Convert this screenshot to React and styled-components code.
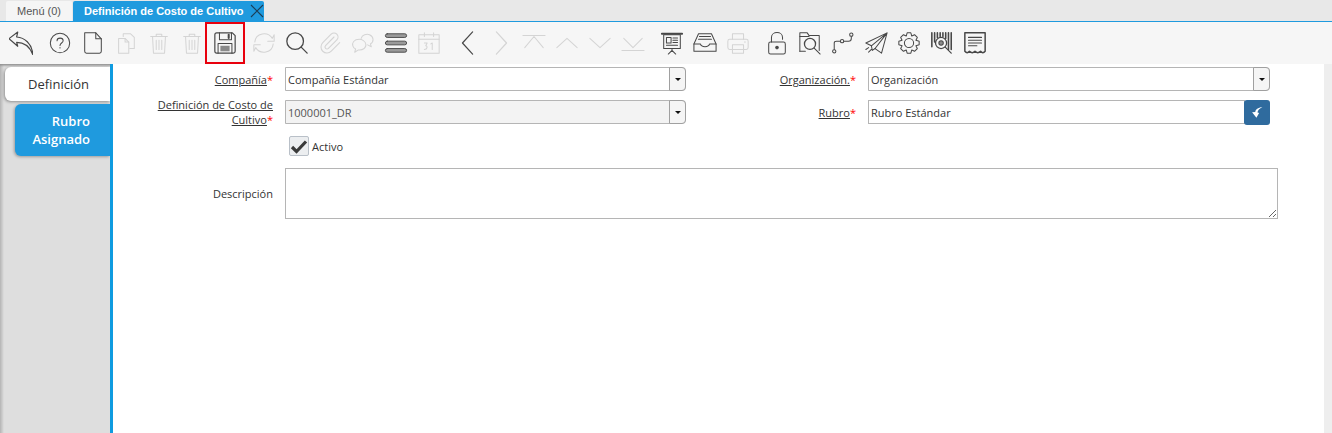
import React from "react";
import styled, { createGlobalStyle } from "styled-components";

const GlobalStyle = createGlobalStyle`
  html, body {
    margin: 0;
    padding: 0;
    height: 100%;
    overflow: hidden;
    background: #fff;
    font-family: "Open Sans", sans-serif;
  }
`;

const Page = styled.div`
  width: 1332px;
  height: 433px;
  display: flex;
  flex-direction: column;
`;

const TabBar = styled.div`
  height: 21px;
  display: flex;
  align-items: flex-end;
  padding-left: 6px;
  gap: 1px;
  background: #e8e8e8;
  border-bottom: 1px solid #1f9ade;
`;

const Tab = styled.div`
  height: 20px;
  display: flex;
  align-items: center;
  box-sizing: border-box;
  font-family: "Liberation Sans", Arial, sans-serif;
  font-size: 11px;
  padding: ${(p) => (p.$active ? "0 0 0 11px" : "0 11px 0 11px")};
  background: ${(p) => (p.$active ? "#1f9ade" : "#f5f5f5")};
  color: ${(p) => (p.$active ? "#fff" : "#555")};
  font-weight: ${(p) => (p.$active ? 700 : 400)};
  border-radius: 2px 2px 0 0;
`;

const TabClose = styled.svg`
  width: 14px;
  height: 14px;
  margin-left: 6px;
`;

const Toolbar = styled.div`
  height: 42px;
  display: flex;
  align-items: center;
  padding-left: 4px;
  gap: 6px;
  background: #f6f6f6;
`;

const ToolGroup = styled.div`
  display: flex;
`;

const ToolButton = styled.div`
  position: relative;
  width: 33px;
  height: 42px;
  display: flex;
  align-items: center;
  justify-content: center;
  color: ${(p) => (p.$off ? "#d4d4d4" : "#484848")};

  svg {
    width: 24px;
    height: 24px;
    fill: none;
    stroke: currentColor;
    stroke-width: 1.1;
    stroke-linecap: round;
    stroke-linejoin: round;
  }
`;

const Highlight = styled.div`
  position: absolute;
  left: -3px;
  top: 0;
  width: 40px;
  height: 42px;
  box-sizing: border-box;
  border: 2.5px solid #e8000d;
`;

const Body = styled.div`
  flex: 1;
  display: flex;
  min-height: 0;
`;

const SideTabs = styled.div`
  width: 110px;
  box-sizing: border-box;
  padding-top: 3px;
  display: flex;
  flex-direction: column;
  align-items: flex-end;
  gap: 3px;
  background: linear-gradient(#8f8f8f, transparent 3px),
    linear-gradient(90deg, #b4b4b4, #dedede 4px);
`;

const SideTab = styled.div`
  box-sizing: border-box;
  font-size: 13px;
  line-height: 18px;
  text-align: right;
  border-radius: 6px 0 0 6px;
  ${(p) =>
    p.$active
      ? `
    width: 105px;
    height: 34px;
    padding: 8px 21px 0 0;
    background: #fff;
    color: #333;
    box-shadow: -1px 1px 3px rgba(0, 0, 0, 0.35);
  `
      : `
    width: 95px;
    height: 52px;
    padding: 8px 20px 0 0;
    background: #1f9ade;
    color: #fff;
    font-weight: 600;
    box-shadow: -1px 1px 3px rgba(0, 0, 0, 0.3);
  `}
`;

const Content = styled.div`
  flex: 1;
  border-left: 3px solid #0f9be0;
  background: #fff;
  padding-top: 3px;
`;

const Form = styled.div`
  display: grid;
  grid-template-columns: 172px 401px 182px 402px;
  font-size: 11px;
  color: #333;
`;

const Label = styled.div`
  height: ${(p) => p.$height || 24}px;
  margin-bottom: ${(p) => p.$gap ?? 9}px;
  padding-right: 12px;
  box-sizing: border-box;
  display: flex;
  align-items: center;
  justify-content: flex-end;
  text-align: right;
  line-height: 15px;
`;

const LabelText = styled.span`
  text-decoration: underline;
`;

const Star = styled.span`
  color: #f00;
`;

const Combo = styled.div`
  height: 24px;
  margin-bottom: 9px;
  display: flex;
  box-sizing: border-box;
  border: 1px solid #b5b5b5;
  border-radius: 0 4px 4px 0;
  background: ${(p) => (p.$readonly ? "#f3f3f3" : "#fff")};
`;

const ComboText = styled.div`
  flex: 1;
  padding-left: 2px;
  line-height: 23px;
  color: ${(p) => (p.$readonly ? "#555" : "#333")};
`;

const ComboArrow = styled.div`
  width: 15px;
  margin: -1px -1px -1px 0;
  display: flex;
  align-items: center;
  justify-content: center;
  background: #f5f5f5;
  border: 1px solid #a0a0a0;
  border-radius: 0 4px 4px 0;

  &::after {
    content: "";
    border-left: 3.5px solid transparent;
    border-right: 3.5px solid transparent;
    border-top: 3.5px solid #111;
  }
`;

const SearchRow = styled.div`
  height: 25px;
  margin-bottom: 8px;
  display: flex;
  align-items: flex-start;
`;

const SearchField = styled.div`
  width: 378px;
  height: 24px;
  box-sizing: border-box;
  border: 1px solid #b5b5b5;
  line-height: 23px;
  padding-left: 2px;
`;

const SearchButton = styled.div`
  width: 26px;
  height: 25px;
  margin-left: -1px;
  display: flex;
  align-items: center;
  justify-content: center;
  border-radius: 3px;
  background: #2f6b9e;
`;

const CheckRow = styled.div`
  grid-column: 2 / 5;
  height: 20px;
  margin: 3px 0 12px 4px;
  display: flex;
  align-items: center;
  gap: 3px;
`;

const CheckBox = styled.div`
  width: 20px;
  height: 20px;
  box-sizing: border-box;
  border: 1px solid #b9c0c8;
  border-radius: 2px;
  background: #eceef0;
  display: flex;
  align-items: center;
  justify-content: center;
`;

const Description = styled.textarea`
  grid-column: 2 / 5;
  width: 993px;
  height: 51px;
  margin: 0;
  padding: 2px;
  box-sizing: border-box;
  border: 1px solid #b5b5b5;
  border-radius: 0;
  outline: none;
  background: #fff;
`;

const Scrollbar = styled.div`
  width: 8px;
  background: #eeeeee;
`;

const Undo = () => (
  <svg viewBox="2 2 22 22">
    <path d="M2 9 L10 3 L9 7.5 C16 8 23 13 24 24 C21 16 16 12.5 9 12.5 L10 16 Z" />
  </svg>
);
const Help = () => (
  <svg viewBox="0 0 26 26">
    <circle cx="13" cy="13" r="10.5" />
    <path d="M9.8 10.5 C9.8 6.8 16.4 6.8 16.4 10.5 C16.4 13 13 13 13 15.6" />
    <path d="M13 18 v.4" />
  </svg>
);
const NewDoc = () => (
  <svg viewBox="0 0 26 26">
    <path d="M4 2 H16 L22 8.5 V22 Q22 24 20 24 H6 Q4 24 4 22 Z" />
    <path d="M16 2 V8.5 H22" />
  </svg>
);
const Copy = () => (
  <svg viewBox="0 0 26 26">
    <path d="M10 6 V3 H18 L22 7 V19 H17" />
    <path d="M5 8 H12 L16 12 V24 H5 Z" />
    <path d="M12 8 V12 H16" />
  </svg>
);
const Trash = () => (
  <svg viewBox="0 0 26 26">
    <path d="M4 6 H22" />
    <path d="M10 6 V3.5 H16 V6" />
    <path d="M6 6 L7 24 H19 L20 6" />
    <path d="M10 10 V20 M13 10 V20 M16 10 V20" />
  </svg>
);
const Save = () => (
  <svg viewBox="0 0 26 26">
    <path d="M2 4 Q2 2 4 2 H21 L24 5 V22 Q24 24 22 24 H4 Q2 24 2 22 Z" strokeWidth="1.3" />
    <path d="M7 2 V9.5 H20 V2" />
    <path d="M17 4 V7.5" strokeWidth="2.2" />
    <path d="M5.5 24 V13.5 H20.5 V24" />
    <rect x="8" y="16" width="10" height="6" fill="#8a8a8a" stroke="none" />
  </svg>
);
const Refresh = () => (
  <svg viewBox="0 0 26 26">
    <path d="M3 12 C4 2 17 0 22 8 L24 4 V11 H17" />
    <path d="M23 14 C22 24 9 26 4 18 L2 22 V15 H9" />
  </svg>
);
const Search = () => (
  <svg viewBox="0 0 26 26">
    <circle cx="11" cy="11" r="9" strokeWidth="1.4" />
    <path d="M17.5 17.5 L24 24" strokeWidth="1.4" />
  </svg>
);
const Attach = () => (
  <svg viewBox="0 0 24 24">
    <path d="m16 6-8.414 8.586a2 2 0 0 0 2.829 2.828l8.414-8.586a4 4 0 1 0-5.657-5.657l-8.379 8.551a6 6 0 1 0 8.485 8.485l8.379-8.551" />
  </svg>
);
const Chat = () => (
  <svg viewBox="0 0 26 26">
    <path d="M9 9 C3 9 1 13 2 16 C2.5 18 4 19 5 19.5 L4 23 L8 20.5 C13 21 17 18 16 14 C15.5 11 12 9 9 9 Z" />
    <path d="M11 8 C12 4 17 3 20 4 C25 6 25 12 21 14 L22 17 L18 15" />
  </svg>
);
const Rows = () => (
  <svg viewBox="0 0 26 26">
    <rect x="1.5" y="3" width="23" height="4" rx="2" fill="#9a9a9a" strokeWidth="1" />
    <rect x="1.5" y="11" width="23" height="4" rx="2" fill="#9a9a9a" strokeWidth="1" />
    <rect x="1.5" y="19" width="23" height="4" rx="2" fill="#9a9a9a" strokeWidth="1" />
  </svg>
);
const Calendar = () => (
  <svg viewBox="0 0 26 26">
    <rect x="2" y="4" width="22" height="20" />
    <path d="M2 9 H24 M8 2 V6 M18 2 V6" />
    <path d="M8 13 H11 L9.5 16 C11.5 16 11.5 20 8 20 M15 14 L16.5 13 V20" strokeWidth="1.1" />
  </svg>
);
const Prev = () => (
  <svg viewBox="0 0 26 26">
    <path d="M18 1 L7 13 L18 25" strokeWidth="1.3" />
  </svg>
);
const Next = () => (
  <svg viewBox="0 0 26 26">
    <path d="M8 1 L19 13 L8 25" strokeWidth="1.3" />
  </svg>
);
const First = () => (
  <svg viewBox="0 0 26 26">
    <path d="M1 5 H25 M3 18 L13 6 L23 18" />
  </svg>
);
const Up = () => (
  <svg viewBox="0 0 26 26">
    <path d="M2 18 L13 8 L24 18" />
  </svg>
);
const Down = () => (
  <svg viewBox="0 0 26 26">
    <path d="M2 8 L13 18 L24 8" />
  </svg>
);
const Last = () => (
  <svg viewBox="0 0 26 26">
    <path d="M3 8 L13 18 L23 8 M1 21 H25" />
  </svg>
);
const Board = () => (
  <svg viewBox="0 0 26 26">
    <path d="M2 3 H24" strokeWidth="2" />
    <rect x="4" y="4" width="18" height="15" />
    <rect x="7" y="7" width="5" height="6" strokeWidth="1.1" />
    <path d="M14 7.5 H19 M14 10 H19 M14 12.5 H19 M7 15.5 H19" strokeWidth="1.1" />
    <path d="M13 19 V21 M13 21 L9 25 M13 21 L17 25" />
  </svg>
);
const Tray = () => (
  <svg viewBox="0 0 26 26">
    <path d="M6 3 H20 L25 14 V22 H1 V14 Z" />
    <path d="M1 14 H8 C9 18 17 18 18 14 H25" />
    <path d="M7 6 H19 M6 9 H20" />
  </svg>
);
const Printer = () => (
  <svg viewBox="0 0 26 26">
    <path d="M7 9 V3 H19 V9" />
    <rect x="2" y="9" width="22" height="11" rx="2" />
    <rect x="7" y="15" width="12" height="9" />
    <path d="M20 12 h1" />
  </svg>
);
const Lock = () => (
  <svg viewBox="0 0 26 26">
    <path d="M7 12 V7 C7 0 19 0 19 7 V9" />
    <rect x="4" y="12" width="18" height="13" rx="2" />
    <circle cx="13" cy="18" r="1.4" fill="currentColor" />
  </svg>
);
const FolderSearch = () => (
  <svg viewBox="0 0 26 26">
    <path d="M2 22 V2 H10 L12 5 H23 V21" />
    <path d="M2 6 H12" />
    <circle cx="13" cy="14" r="6" strokeWidth="1.4" />
    <path d="M17.5 18.5 L24 25 M2 22 H8" />
  </svg>
);
const Workflow = () => (
  <svg viewBox="0 0 26 26">
    <circle cx="3.5" cy="22" r="1.8" />
    <circle cx="12" cy="11" r="1.8" />
    <circle cx="22" cy="4" r="1.8" />
    <path d="M3.5 20 V13 Q3.5 11 6 11 H10 M14 11 H19 Q22 11 22 8 V6" />
  </svg>
);
const Send = () => (
  <svg viewBox="0 0 26 26">
    <path d="M25 2 L2 13 L8 16 L25 2 L12 19 L19 24 Z" />
    <path d="M8 16 L9 21 L12 19 M5 23 L8 20 M2 20 L5 18" />
  </svg>
);
const Gear = () => (
  <svg viewBox="0 0 26 26">
    <circle cx="13" cy="13" r="5" />
    <path d="M11 2 H15 L16 5.5 L19 4 L22 7 L20.5 10 L24 11 V15 L20.5 16 L22 19 L19 22 L16 20.5 L15 24 H11 L10 20.5 L7 22 L4 19 L5.5 16 L2 15 V11 L5.5 10 L4 7 L7 4 L10 5.5 Z" />
  </svg>
);
const Barcode = () => (
  <svg viewBox="0 0 26 26">
    <path d="M2 2 V17 M5 2 V12 M8 2 V7 M11 2 V6 M14 2 V6 M17 2 V8 M20 2 V20 M23 2 V20" strokeWidth="1.7" />
    <circle cx="12" cy="13" r="6" fill="#f6f6f6" strokeWidth="1.4" />
    <circle cx="12" cy="13" r="2.4" fill="#8a8a8a" />
    <path d="M16.5 17.5 L23 24" strokeWidth="1.4" />
  </svg>
);
const Receipt = () => (
  <svg viewBox="0 0 26 26">
    <path d="M2 2 H24 V22 Q21.5 25 19 22 Q16 25 13 22 Q10 25 7 22 Q4.5 25 2 22 Z" strokeWidth="1.6" />
    <path d="M6 7 H20 M6 10 H20 M6 13 H20 M6 16 H15" strokeWidth="1.3" />
  </svg>
);

const groups = [
  [{ icon: Undo }],
  [
    { icon: Help },
    { icon: NewDoc },
    { icon: Copy, off: true },
    { icon: Trash, off: true },
    { icon: Trash, off: true },
    { icon: Save, marked: true },
  ],
  [
    { icon: Refresh, off: true },
    { icon: Search },
    { icon: Attach, off: true },
    { icon: Chat, off: true },
    { icon: Rows },
    { icon: Calendar, off: true },
  ],
  [
    { icon: Prev },
    { icon: Next, off: true },
    { icon: First, off: true },
    { icon: Up, off: true },
    { icon: Down, off: true },
    { icon: Last, off: true },
  ],
  [{ icon: Board }, { icon: Tray }, { icon: Printer, off: true }],
  [
    { icon: Lock },
    { icon: FolderSearch },
    { icon: Workflow },
    { icon: Send },
    { icon: Gear },
    { icon: Barcode },
    { icon: Receipt },
  ],
];

export default function App() {
  return (
    <Page>
      <GlobalStyle />
      <TabBar>
        <Tab>Menú (0)</Tab>
        <Tab $active>
          Definición de Costo de Cultivo
          <TabClose viewBox="0 0 14 14">
            <path d="M1 1 L13 13 M13 1 L1 13" stroke="#1c3d55" strokeWidth="1.1" />
          </TabClose>
        </Tab>
      </TabBar>
      <Toolbar>
        {groups.map((group, i) => (
          <ToolGroup key={i}>
            {group.map(({ icon: Icon, off, marked }, j) => (
              <ToolButton key={j} $off={off}>
                <Icon />
                {marked && <Highlight />}
              </ToolButton>
            ))}
          </ToolGroup>
        ))}
      </Toolbar>
      <Body>
        <SideTabs>
          <SideTab $active>Definición</SideTab>
          <SideTab>
            Rubro
            <br />
            Asignado
          </SideTab>
        </SideTabs>
        <Content>
          <Form>
            <Label>
              <span>
                <LabelText>Compañía</LabelText>
                <Star>*</Star>
              </span>
            </Label>
            <Combo>
              <ComboText>Compañía Estándar</ComboText>
              <ComboArrow />
            </Combo>
            <Label>
              <span>
                <LabelText>Organización.</LabelText>
                <Star>*</Star>
              </span>
            </Label>
            <Combo>
              <ComboText>Organización</ComboText>
              <ComboArrow />
            </Combo>
            <Label>
              <span>
                <LabelText>
                  Definición de Costo de
                  <br />
                  Cultivo
                </LabelText>
                <Star>*</Star>
              </span>
            </Label>
            <Combo $readonly>
              <ComboText $readonly>1000001_DR</ComboText>
              <ComboArrow />
            </Combo>
            <Label>
              <span>
                <LabelText>Rubro</LabelText>
                <Star>*</Star>
              </span>
            </Label>
            <SearchRow>
              <SearchField>Rubro Estándar</SearchField>
              <SearchButton>
                <svg width="13" height="13" viewBox="0 0 12 12">
                  <path d="M10.5 1 C6.5 1.5 4 3.5 4 5.5 L1 5.8 L5 10.8 L7.5 6.5 L6 6 C6 4 8 2.5 10.5 1 Z" fill="#fff" />
                </svg>
              </SearchButton>
            </SearchRow>
            <span />
            <CheckRow>
              <CheckBox>
                <svg width="18" height="15" viewBox="0 0 18 15">
                  <path d="M2 8 L6.5 12.5 L16 2.5" fill="none" stroke="#3a3a3a" strokeWidth="3.2" />
                </svg>
              </CheckBox>
              Activo
            </CheckRow>
            <Label $height={51} $gap={0}>
              Descripción
            </Label>
            <Description />
          </Form>
        </Content>
        <Scrollbar />
      </Body>
    </Page>
  );
}
